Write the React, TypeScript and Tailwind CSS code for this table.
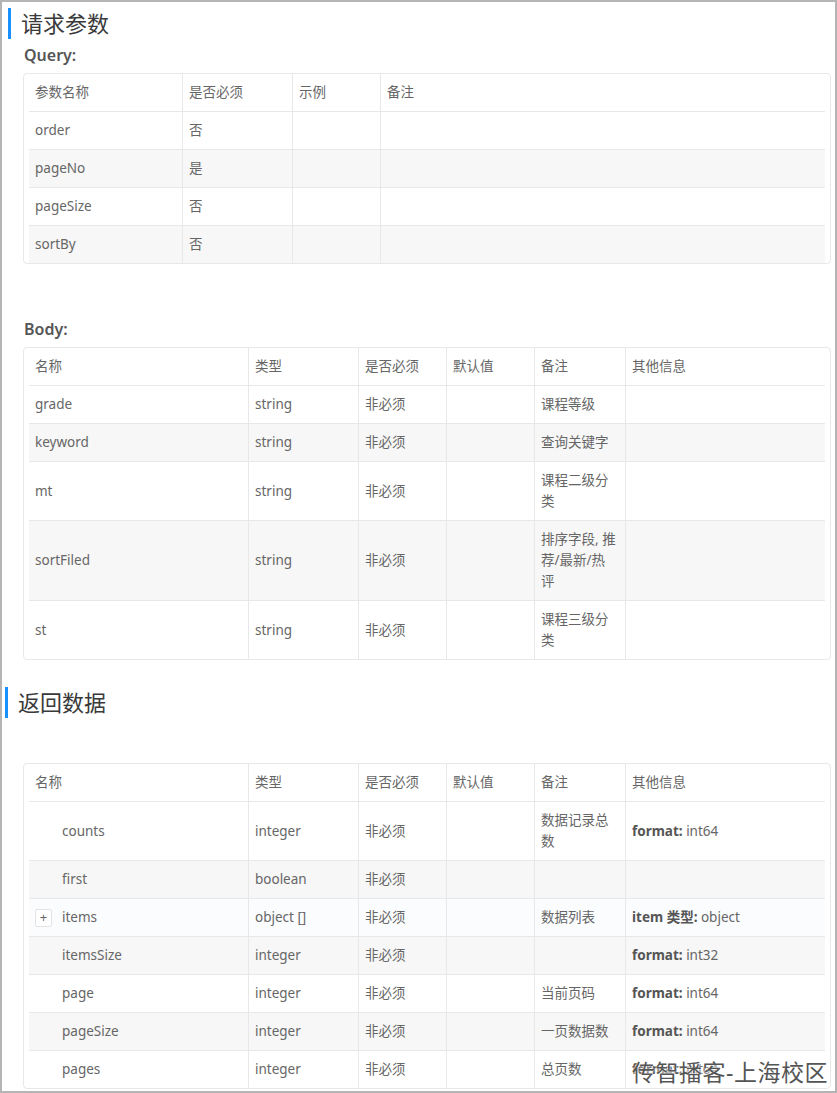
import type { ReactNode } from 'react';

type Cell = ReactNode;

const font = { fontFamily: '"Noto Sans", "Noto Sans CJK SC", sans-serif' };

const SectionTitle = ({ title, offset }: { title: string; offset: string }) => (
  <div className={`flex items-center ${offset}`}>
    <span className="w-[3px] h-[31px] bg-[#1890ff]" />
    <span className="ml-[10px] text-[22px] leading-[31px] text-[#3a3a3a]">{title}</span>
  </div>
);

const Label = ({ text, className }: { text: string; className: string }) => (
  <div className={`ml-[22px] h-[24px] leading-[24px] text-[16px] font-semibold text-[#555] ${className}`}>
    {text}
  </div>
);

const Fmt = ({ k, v }: { k: string; v: string }) => (
  <span>
    <b className="font-bold text-[#555]">{k}</b> {v}
  </span>
);

const Table = ({
  cols,
  head,
  rows,
  bgs,
}: {
  cols: string;
  head: string[];
  rows: Cell[][];
  bgs: string[];
}) => (
  <div className="ml-[21px] w-[808px] border border-[#e8e8e8] rounded-[4px] px-[5px]">
    {[head as Cell[], ...rows].map((row, ri) => (
      <div
        key={ri}
        className={`grid ${cols} ${ri < rows.length ? 'border-b border-[#e8e8e8]' : ''} ${ri === 0 ? 'bg-white' : bgs[ri - 1]}`}
      >
        {row.map((c, ci) => (
          <div
            key={ci}
            className={`px-[6px] py-[8px] flex items-center text-[13.5px] leading-[21px] text-[#666] ${ci < row.length - 1 ? 'border-r border-[#e8e8e8]' : ''}`}
          >
            {c}
          </div>
        ))}
      </div>
    ))}
  </div>
);

const Lines = ({ lines }: { lines: string[] }) => (
  <div>
    {lines.map((l) => (
      <div key={l}>{l}</div>
    ))}
  </div>
);

const Name = ({ text, plus }: { text: string; plus?: boolean }) =>
  plus ? (
    <span className="flex items-center">
      <span className="w-[17px] h-[18px] border border-[#e3e3e3] rounded-[2px] flex items-center justify-center text-[13px] leading-none text-[#666] bg-white">
        +
      </span>
      <span className="ml-[10px]">{text}</span>
    </span>
  ) : (
    <span className="pl-[27px]">{text}</span>
  );

const W = 'bg-white';
const G = 'bg-[#f7f7f7]';

export default function App() {
  const bodyCols = 'grid-cols-[220px_110px_88px_88px_91px_199px]';
  return (
    <div style={font} className="relative w-[837px] h-[1093px] bg-white border-2 border-[#b4b4b4] overflow-hidden">
      <div className="pt-[6px]">
        <SectionTitle title="请求参数" offset="ml-[6px]" />
        <Label text="Query:" className="mt-[4px]" />
        <div className="mt-[6px]">
          <Table
            cols="grid-cols-[154px_110px_88px_444px]"
            head={['参数名称', '是否必须', '示例', '备注']}
            rows={[
              ['order', '否', '', ''],
              ['pageNo', '是', '', ''],
              ['pageSize', '否', '', ''],
              ['sortBy', '否', '', ''],
            ]}
            bgs={[W, G, W, G]}
          />
        </div>

        <Label text="Body:" className="mt-[53px]" />
        <div className="mt-[6px]">
          <Table
            cols={bodyCols}
            head={['名称', '类型', '是否必须', '默认值', '备注', '其他信息']}
            rows={[
              ['grade', 'string', '非必须', '', '课程等级', ''],
              ['keyword', 'string', '非必须', '', '查询关键字', ''],
              ['mt', 'string', '非必须', '', <Lines lines={['课程二级分', '类']} />, ''],
              ['sortFiled', 'string', '非必须', '', <Lines lines={['排序字段, 推', '荐/最新/热', '评']} />, ''],
              ['st', 'string', '非必须', '', <Lines lines={['课程三级分', '类']} />, ''],
            ]}
            bgs={[W, G, W, G, W]}
          />
        </div>

        <div className="mt-[27px]">
          <SectionTitle title="返回数据" offset="ml-[3px]" />
        </div>
        <div className="mt-[45px]">
          <Table
            cols={bodyCols}
            head={['名称', '类型', '是否必须', '默认值', '备注', '其他信息']}
            rows={[
              [<Name text="counts" />, 'integer', '非必须', '', <Lines lines={['数据记录总', '数']} />, <Fmt k="format:" v="int64" />],
              [<Name text="first" />, 'boolean', '非必须', '', '', ''],
              [<Name text="items" plus />, 'object []', '非必须', '', '数据列表', <Fmt k="item 类型:" v="object" />],
              [<Name text="itemsSize" />, 'integer', '非必须', '', '', <Fmt k="format:" v="int32" />],
              [<Name text="page" />, 'integer', '非必须', '', '当前页码', <Fmt k="format:" v="int64" />],
              [<Name text="pageSize" />, 'integer', '非必须', '', '一页数据数', <Fmt k="format:" v="int64" />],
              [<Name text="pages" />, 'integer', '非必须', '', '总页数', <Fmt k="format:" v="int64" />],
            ]}
            bgs={[W, G, 'bg-[#fbfcfe]', G, W, G, W]}
          />
        </div>
      </div>

      <div className="absolute right-[7px] bottom-[4px] text-[23px] leading-[30px] tracking-[0.5px] text-[#555] [text-shadow:0_0_2px_#fff,0_0_2px_#fff]">
        传智播客-上海校区
      </div>
    </div>
  );
}
